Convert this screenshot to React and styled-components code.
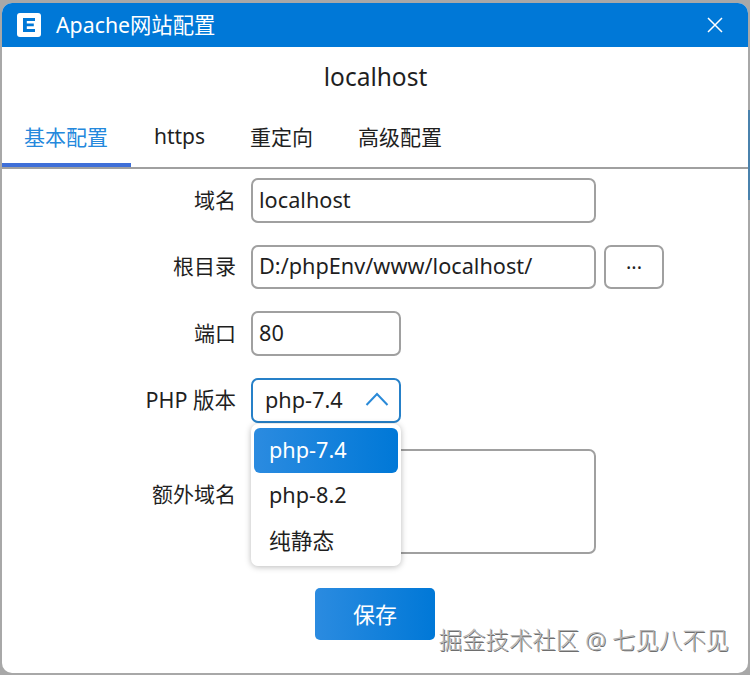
import styled, { createGlobalStyle } from 'styled-components';

const GlobalStyle = createGlobalStyle`
  html, body {
    margin: 0;
    padding: 0;
    background: #a8a8a8;
  }
  body {
    font-family: "Noto Sans", "Noto Sans CJK SC", sans-serif;
    color: #1f1f1f;
  }
`;

const Screen = styled.div`
  width: 750px;
  height: 675px;
  padding: 3px 2px 0;
  box-sizing: border-box;
  overflow: hidden;
  background: linear-gradient(#4a82ad, #4a82ad) right 110px / 2px 90px no-repeat;
`;

const Window = styled.div`
  position: relative;
  height: 670px;
  background: #fff;
  border-radius: 10px;
  overflow: hidden;
`;

const TitleBar = styled.div`
  height: 44px;
  background: #0078d7;
  display: flex;
  align-items: center;
  padding: 0 25px 0 15px;
  gap: 15px;
  color: #fff;
  font-size: 21.3px;
`;

const TitleText = styled.span`
  flex: 1;
  padding-bottom: 3px;
`;

const Heading = styled.h1`
  margin: 0;
  height: 60px;
  padding: 0 0 2px 1px;
  box-sizing: border-box;
  display: flex;
  align-items: center;
  justify-content: center;
  font-size: 24.5px;
  font-weight: 400;
`;

const TabBar = styled.div`
  display: flex;
  height: 60px;
  border-bottom: 2px solid #a0a0a0;
`;

const Tab = styled.div`
  display: flex;
  align-items: center;
  justify-content: center;
  box-sizing: border-box;
  width: ${(props) => props.$width}px;
  padding-top: 1px;
  padding-right: ${(props) => (props.$active ? 1 : 0)}px;
  font-size: 21px;
  color: ${(props) => (props.$active ? '#2488dc' : '#1f1f1f')};
  border-bottom: 4px solid ${(props) => (props.$active ? '#3f6fd8' : 'transparent')};
`;

const Form = styled.div`
  display: flex;
  flex-direction: column;
  gap: 22px;
  padding-top: 9px;
`;

const Row = styled.div`
  display: flex;
  align-items: center;
  gap: 15px;
`;

const Label = styled.div`
  width: 234px;
  text-align: right;
  font-size: ${(props) => props.$size || 21}px;
  padding-bottom: ${(props) => props.$lift || 3}px;
`;

const Input = styled.div`
  box-sizing: border-box;
  width: ${(props) => props.$width}px;
  height: 44.67px;
  display: flex;
  align-items: center;
  padding: 0 6px 2px;
  border: 2px solid #a0a0a0;
  border-radius: 7px;
  font-size: 21.7px;
`;

const BrowseButton = styled.div`
  box-sizing: border-box;
  width: 60px;
  height: 44.67px;
  margin-left: -7px;
  display: flex;
  align-items: center;
  justify-content: center;
  padding-bottom: 10px;
  border: 2px solid #a0a0a0;
  border-radius: 7px;
  font-size: 20px;
`;

const SelectWrap = styled.div`
  position: relative;
  width: 150px;
`;

const SelectBox = styled.div`
  box-sizing: border-box;
  height: 44.67px;
  display: flex;
  align-items: center;
  justify-content: space-between;
  padding: 0 10px 2px 12px;
  border: 2px solid #2680c8;
  border-radius: 7px;
  font-size: 21.7px;
`;

const Menu = styled.div`
  position: absolute;
  top: 46px;
  left: 0;
  z-index: 2;
  box-sizing: border-box;
  width: 150px;
  height: 142px;
  padding: 4px 3px;
  background: #fff;
  border-radius: 7px;
  box-shadow: 0 1px 6px rgba(0, 0, 0, 0.28);
`;

const MenuItem = styled.div`
  height: 45px;
  box-sizing: border-box;
  display: flex;
  align-items: center;
  padding: 0 0 2px 15px;
  border-radius: 6px;
  font-size: 21.7px;
  color: ${(props) => (props.$selected ? '#fff' : '#1f1f1f')};
  background: ${(props) => (props.$selected ? 'linear-gradient(90deg, #2b8be0, #0078d7)' : 'transparent')};
`;

const TextArea = styled.div`
  box-sizing: border-box;
  width: 345px;
  height: 105px;
  margin-top: 4px;
  border: 2px solid #a0a0a0;
  border-radius: 7px;
`;

const SaveRow = styled.div`
  display: flex;
  justify-content: center;
  padding-top: 34px;
`;

const SaveButton = styled.div`
  width: 120px;
  height: 52px;
  box-sizing: border-box;
  display: flex;
  align-items: center;
  justify-content: center;
  padding-bottom: 2px;
  border-radius: 5px;
  color: #fff;
  font-size: 22px;
  background: linear-gradient(90deg, #2b8be0, #0078d7);
`;

const Watermark = styled.div`
  position: absolute;
  right: 19px;
  bottom: 17px;
  font-size: 23.4px;
  font-weight: 300;
  color: #b4b4b4;
  text-shadow: 1px 1px 0 #6e6e6e;
`;

function LogoIcon() {
  return (
    <svg width="24" height="24" viewBox="0 0 24 24">
      <rect width="24" height="24" rx="3" fill="#fff" />
      <path d="M6 5h12v3h-8.2v2.5h7v2.8h-7v2.7h8.2v3h-12z" fill="#0078d7" />
    </svg>
  );
}

function CloseIcon() {
  return (
    <svg width="16" height="16" viewBox="0 0 16 16">
      <path d="M1 1l14 14M15 1L1 15" stroke="#fff" strokeWidth="1.5" fill="none" />
    </svg>
  );
}

function ChevronUp() {
  return (
    <svg width="24" height="14" viewBox="0 0 24 14">
      <path d="M1.5 13L12 2l10.5 11" stroke="#2a8ad8" strokeWidth="2" fill="none" />
    </svg>
  );
}

export default function App() {
  return (
    <>
      <GlobalStyle />
      <Screen>
        <Window>
          <TitleBar>
            <LogoIcon />
            <TitleText>Apache网站配置</TitleText>
            <CloseIcon />
          </TitleBar>
          <Heading>localhost</Heading>
          <TabBar>
            <Tab $width={129} $active>基本配置</Tab>
            <Tab $width={97}>https</Tab>
            <Tab $width={107}>重定向</Tab>
            <Tab $width={130}>高级配置</Tab>
          </TabBar>
          <Form>
            <Row>
              <Label>域名</Label>
              <Input $width={345}>localhost</Input>
            </Row>
            <Row>
              <Label>根目录</Label>
              <Input $width={345}>D:/phpEnv/www/localhost/</Input>
              <BrowseButton>...</BrowseButton>
            </Row>
            <Row>
              <Label>端口</Label>
              <Input $width={150}>80</Input>
            </Row>
            <Row>
              <Label $size={21.5}>PHP 版本</Label>
              <SelectWrap>
                <SelectBox>
                  php-7.4
                  <ChevronUp />
                </SelectBox>
                <Menu>
                  <MenuItem $selected>php-7.4</MenuItem>
                  <MenuItem>php-8.2</MenuItem>
                  <MenuItem>纯静态</MenuItem>
                </Menu>
              </SelectWrap>
            </Row>
            <Row>
              <Label $lift={13}>额外域名</Label>
              <TextArea />
            </Row>
          </Form>
          <SaveRow>
            <SaveButton>保存</SaveButton>
          </SaveRow>
          <Watermark>掘金技术社区 @ 七见八不见</Watermark>
        </Window>
      </Screen>
    </>
  );
}
